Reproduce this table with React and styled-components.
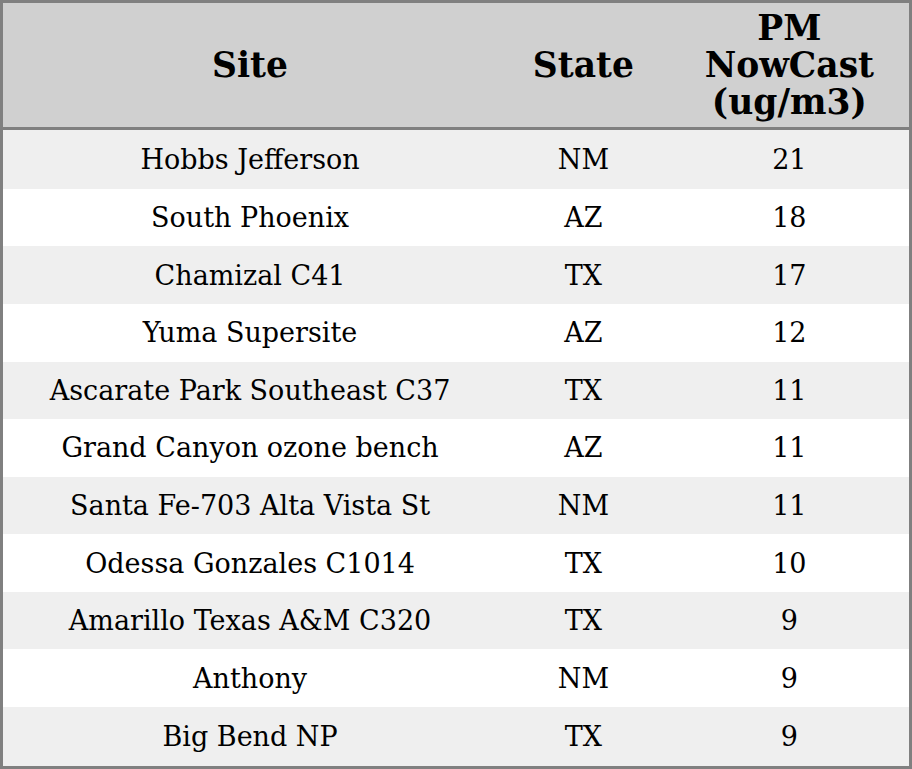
import React from 'react'
import styled, { createGlobalStyle } from 'styled-components'

const GlobalStyle = createGlobalStyle`
  html, body {
    margin: 0;
    padding: 0;
    background: #ffffff;
  }
  body {
    font-family: "DejaVu Serif", serif;
    color: #000000;
  }
`

const Table = styled.table`
  width: 912px;
  height: 769px;
  box-sizing: border-box;
  border-collapse: collapse;
  table-layout: fixed;
  border: 3px solid #808080;
  font-family: "DejaVu Serif", serif;
`

const Col = styled.col`
  width: ${(p) => p.$width}px;
`

const HeadRow = styled.tr`
  height: 127px;
  background: #d0d0d0;
  border-bottom: 3px solid #808080;
`

const HeadCell = styled.th`
  padding: 0 8px;
  font-size: 34.5px;
  font-weight: bold;
  line-height: 37px;
  text-align: center;
  vertical-align: middle;
`

const Row = styled.tr`
  background: ${(p) => (p.$odd ? '#efefef' : '#ffffff')};
`

const Cell = styled.td`
  padding: 0 8px;
  font-size: 27px;
  text-align: center;
  vertical-align: middle;
`

const rows = [
  ['Hobbs Jefferson', 'NM', 21],
  ['South Phoenix', 'AZ', 18],
  ['Chamizal C41', 'TX', 17],
  ['Yuma Supersite', 'AZ', 12],
  ['Ascarate Park Southeast C37', 'TX', 11],
  ['Grand Canyon ozone bench', 'AZ', 11],
  ['Santa Fe-703 Alta Vista St', 'NM', 11],
  ['Odessa Gonzales C1014', 'TX', 10],
  ['Amarillo Texas A&M C320', 'TX', 9],
  ['Anthony', 'NM', 9],
  ['Big Bend NP', 'TX', 9],
]

const App = () => {
  return (
    <>
      <GlobalStyle />
      <Table>
        <colgroup>
          <Col $width={494} />
          <Col $width={172} />
          <Col $width={240} />
        </colgroup>
        <thead>
          <HeadRow>
            <HeadCell>Site</HeadCell>
            <HeadCell>State</HeadCell>
            <HeadCell>PM NowCast (ug/m3)</HeadCell>
          </HeadRow>
        </thead>
        <tbody>
          {rows.map(([site, state, value], i) => (
            <Row key={site} $odd={i % 2 === 0}>
              <Cell>{site}</Cell>
              <Cell>{state}</Cell>
              <Cell>{value}</Cell>
            </Row>
          ))}
        </tbody>
      </Table>
    </>
  )
}

export default App
